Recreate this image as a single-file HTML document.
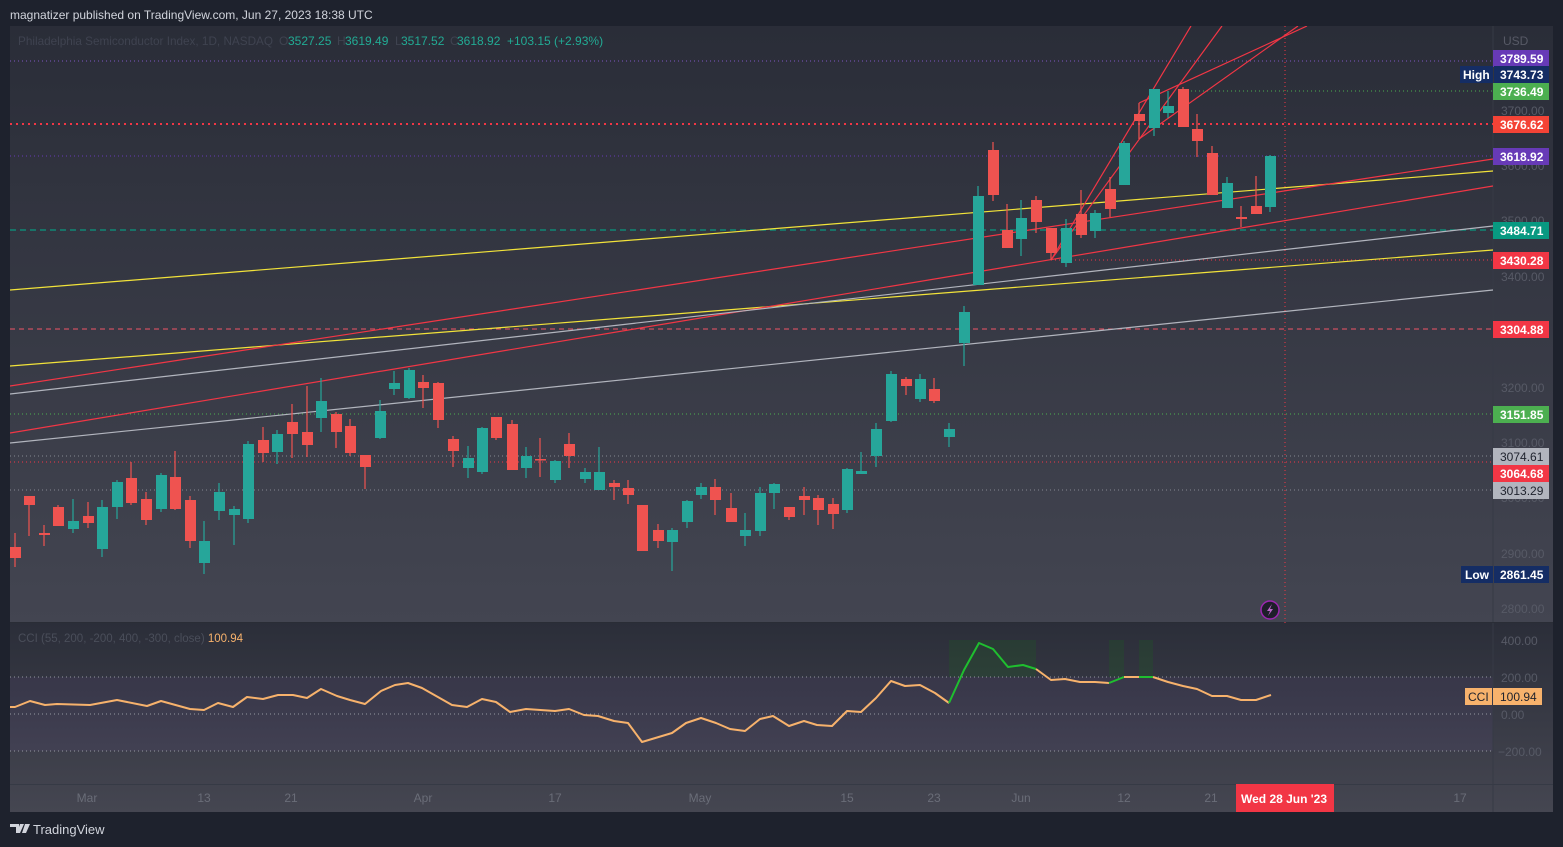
<!DOCTYPE html>
<html><head><meta charset="utf-8"><style>
html,body{margin:0;padding:0;background:#1e222d;width:1563px;height:847px;overflow:hidden}
svg{display:block;font-family:"Liberation Sans",sans-serif}
</style></head><body>
<svg width="1563" height="847" viewBox="0 0 1563 847" xmlns="http://www.w3.org/2000/svg">
<defs>
<linearGradient id="g1" x1="0" y1="0" x2="0" y2="1"><stop offset="0" stop-color="#2a2d38"/><stop offset="1" stop-color="#434551"/></linearGradient>
<linearGradient id="g2" x1="0" y1="0" x2="0" y2="1"><stop offset="0" stop-color="#2b2e39"/><stop offset="1" stop-color="#454651"/></linearGradient>
<clipPath id="cp"><rect x="10" y="26" width="1483" height="597"/></clipPath>
<clipPath id="cc"><rect x="10" y="623" width="1483" height="161"/></clipPath>
</defs>
<rect width="1563" height="847" fill="#1e222d"/>
<text x="10" y="19" fill="#d1d4dc" font-size="12">magnatizer published on TradingView.com, Jun 27, 2023 18:38 UTC</text>
<rect x="10" y="26" width="1543" height="597" fill="url(#g1)"/>
<rect x="10" y="623" width="1543" height="189" fill="url(#g2)"/>
<rect x="10" y="677" width="1483" height="74" fill="#7e57c2" fill-opacity="0.08"/>
<line x1="1493" y1="26" x2="1493" y2="812" stroke="#363a45" stroke-width="1"/>
<line x1="10" y1="784.5" x2="1553" y2="784.5" stroke="#363a45"/>
<line x1="10" y1="622.5" x2="1553" y2="622.5" stroke="#2a2d36"/>
<g clip-path="url(#cp)" fill="none">
<line x1="10" y1="61" x2="1493" y2="61" stroke="#7e57c2" stroke-dasharray="1 3"/>
<line x1="1187" y1="91" x2="1493" y2="91" stroke="#4caf50" stroke-dasharray="1 3"/>
<line x1="10" y1="124" x2="1493" y2="124" stroke="#f23645" stroke-width="2" stroke-dasharray="2 4"/>
<line x1="10" y1="156" x2="1493" y2="156" stroke="#673ab7" stroke-dasharray="1 3"/>
<line x1="10" y1="230" x2="1493" y2="230" stroke="#089981" stroke-width="1.3" stroke-dasharray="6 4"/>
<line x1="1051" y1="260" x2="1493" y2="260" stroke="#f23645" stroke-dasharray="1 3"/>
<line x1="10" y1="329" x2="1493" y2="329" stroke="#f05566" stroke-dasharray="5 4"/>
<line x1="10" y1="414" x2="1493" y2="414" stroke="#4caf50" stroke-dasharray="1 3"/>
<line x1="10" y1="456" x2="1493" y2="456" stroke="#868993" stroke-dasharray="1 3"/>
<line x1="10" y1="462" x2="1493" y2="462" stroke="#f23645" stroke-dasharray="1 3"/>
<line x1="10" y1="490" x2="1493" y2="490" stroke="#868993" stroke-dasharray="1 3"/>
<line x1="1285" y1="26" x2="1285" y2="784" stroke="#f23645" stroke-dasharray="1 3"/>
<line x1="10" y1="290" x2="1493" y2="171" stroke="#f2e33a" stroke-width="1.2"/>
<line x1="10" y1="366" x2="1493" y2="250" stroke="#f2e33a" stroke-width="1.2"/>
<line x1="10" y1="386" x2="1493" y2="159" stroke="#f23645" stroke-width="1.2"/>
<line x1="10" y1="433" x2="1493" y2="186" stroke="#f23645" stroke-width="1.2"/>
<line x1="10" y1="394" x2="1493" y2="226" stroke="#b2b5be" stroke-width="1.2"/>
<line x1="10" y1="443" x2="1493" y2="290" stroke="#b2b5be" stroke-width="1.2"/>
<line x1="1051" y1="260" x2="1191" y2="26" stroke="#f23645" stroke-width="1.2"/>
<line x1="1051" y1="260" x2="1222" y2="26" stroke="#f23645" stroke-width="1.2"/>
<line x1="1139" y1="103" x2="1307" y2="26" stroke="#f23645" stroke-width="1.2"/>
<line x1="1139" y1="139" x2="1298" y2="26" stroke="#f23645" stroke-width="1.2"/>
<path stroke="#ef5350" stroke-width="1.2" d="M15 533V567M29 496V536M44 525V546M58 505V526M88 502V528M131 462V505M146 492V525M175 451V510M190 496V548M263 427V462M292 404V458M307 386V457M336 412V448M350 419V456M365 455V489M423 375V408M438 382V428M453 436V467M496 417V440M512 420V470M540 438V477M569 433V468M614 480V500M628 480V504M642 505V551M658 524V548M715 479V515M731 493V522M789 507V520M804 487V515M818 495V525M833 498V529M906 377V395M934 378V403M993 142V201M1007 204V248M1036 196V233M1051 228V260M1081 190V238M1110 177V217M1139 103V139M1183 87V127M1197 114V157M1212 146V195M1241 206V227M1256 176V214"/>
<path fill="#ef5350" d="M10 547h11v11h-11zM24 496h11v9h-11zM39 533h11v2h-11zM53 507h11v19h-11zM83 516h11v7h-11zM126 478h11v25h-11zM141 499h11v21h-11zM170 477h11v32h-11zM185 500h11v41h-11zM258 440h11v13h-11zM287 422h11v12h-11zM302 432h11v13h-11zM331 414h11v18h-11zM345 426h11v27h-11zM360 455h11v12h-11zM418 382h11v6h-11zM433 383h11v37h-11zM448 439h11v12h-11zM491 417h11v21h-11zM507 424h11v46h-11zM535 459h11v1.5h-11zM564 444h11v12h-11zM609 483h11v4h-11zM623 488h11v7h-11zM637 505h11v46h-11zM653 530h11v11h-11zM710 487h11v13h-11zM726 508h11v14h-11zM784 507h11v10h-11zM799 496h11v4h-11zM813 498h11v12h-11zM828 504h11v10h-11zM901 379h11v7h-11zM929 389h11v12h-11zM988 150h11v45h-11zM1002 230h11v18h-11zM1031 200h11v22h-11zM1046 228h11v25h-11zM1076 214h11v21h-11zM1105 189h11v20h-11zM1134 114h11v7h-11zM1178 89h11v38h-11zM1192 129h11v12h-11zM1207 153h11v42h-11zM1236 217h11v2h-11zM1251 206h11v8h-11z"/>
<path stroke="#26a69a" stroke-width="1.2" d="M73 499V533M102 500V557M117 480V519M161 473V512M204 521V574M219 483V520M234 506V545M248 441V523M277 430V464M321 378V432M380 400V439M394 371V395M409 368V399M468 446V478M482 427V474M526 447V478M555 460V483M585 468V483M599 447V490M672 528V571M687 500V528M701 483V499M745 513V546M760 487V536M774 483V509M847 468V513M861 452V474M876 423V467M891 371V422M920 374V402M949 423V447M964 306V366M978 186V285M1021 200V256M1066 219V267M1095 210V238M1124 141V185M1154 89V136M1168 91V118M1227 177V208M1270 155V212"/>
<path fill="#26a69a" d="M68 521h11v8h-11zM97 507h11v42h-11zM112 482h11v25h-11zM156 475h11v34h-11zM199 541h11v22h-11zM214 492h11v19h-11zM229 509h11v6h-11zM243 444h11v75h-11zM272 434h11v18h-11zM316 401h11v17h-11zM375 411h11v27h-11zM389 383h11v6h-11zM404 370h11v28h-11zM463 458h11v10h-11zM477 428h11v44h-11zM521 456h11v12h-11zM550 461h11v19h-11zM580 472h11v7h-11zM594 472h11v18h-11zM667 530h11v12h-11zM682 501h11v21h-11zM696 487h11v8h-11zM740 530h11v6h-11zM755 493h11v38h-11zM769 484h11v9h-11zM842 469h11v41h-11zM856 471h11v3h-11zM871 429h11v27h-11zM886 374h11v47h-11zM915 379h11v20h-11zM944 429h11v8h-11zM959 312h11v31h-11zM973 196h11v89h-11zM1016 218h11v21h-11zM1061 228h11v35h-11zM1090 213h11v18h-11zM1119 143h11v42h-11zM1149 89h11v39h-11zM1163 106h11v7h-11zM1222 183h11v25h-11zM1265 156h11v51h-11z"/>
</g>
<g font-size="12" fill="#3f4350">
<text x="18" y="45" textLength="255" lengthAdjust="spacingAndGlyphs">Philadelphia Semiconductor Index, 1D, NASDAQ</text>
<text x="279" y="45">O</text><text x="288" y="45" fill="#22ab94">3527.25</text>
<text x="337" y="45">H</text><text x="345" y="45" fill="#22ab94">3619.49</text>
<text x="395" y="45">L</text><text x="401" y="45" fill="#22ab94">3517.52</text>
<text x="450" y="45">C</text><text x="457" y="45" fill="#22ab94">3618.92</text>
<text x="507" y="45" fill="#22ab94">+103.15 (+2.93%)</text>
</g>
<circle cx="1270" cy="610" r="9" fill="#1e1e2a" stroke="#9c27b0" stroke-width="1.5"/>
<path d="M1272 604l-5 7h3l-2 5 5-7h-3z" fill="#ba68c8"/>
<g clip-path="url(#cc)">
<rect x="949" y="640" width="87" height="37" fill="#1b5e20" fill-opacity="0.25"/>
<rect x="1109" y="640" width="15" height="37" fill="#1b5e20" fill-opacity="0.25"/>
<rect x="1139" y="640" width="14" height="37" fill="#1b5e20" fill-opacity="0.25"/>
<g stroke="#9598a1" stroke-dasharray="1 3"><line x1="10" y1="677" x2="1493" y2="677"/><line x1="10" y1="714" x2="1493" y2="714"/><line x1="10" y1="751" x2="1493" y2="751"/></g>
<polyline fill="none" stroke="#f7b26c" stroke-width="2" stroke-linejoin="round" points="10,707 15,707 30,701 45,705 57,704 90,705 117,700 147,706 161,701 190,709 204,710 218,703 233,707 247,697 263,699 278,695 293,695 307,698 321,689 337,696 350,700 365,704 381,691 395,685 408,683 422,688 452,705 467,707 482,699 496,702 510,712 526,709 555,711 569,709 584,715 598,716 614,721 628,723 642,742 672,733 686,723 701,718 716,723 730,729 745,731 760,719 773,716 789,726 804,721 817,725 832,726 847,711 861,712 876,698 891,681 905,686 920,685 935,693 949,703"/>
<polyline fill="none" stroke="#1fbf2f" stroke-width="2" stroke-linejoin="round" points="949,703 964,670 979,643 993,649 1008,667 1023,665 1036,669"/>
<polyline fill="none" stroke="#f7b26c" stroke-width="2" stroke-linejoin="round" points="1036,669 1051,680 1065,679 1080,682 1095,682 1109,683"/>
<polyline fill="none" stroke="#1fbf2f" stroke-width="2" points="1109,683 1124,677"/>
<polyline fill="none" stroke="#f7b26c" stroke-width="2" points="1124,677 1139,677"/>
<polyline fill="none" stroke="#1fbf2f" stroke-width="2" points="1139,677 1153,677"/>
<polyline fill="none" stroke="#f7b26c" stroke-width="2" stroke-linejoin="round" points="1153,677 1168,682 1183,686 1197,689 1212,696 1227,696 1241,700 1256,700 1271,695"/>
</g>
<text x="18" y="642" font-size="11.5" fill="#4a4e5a">CCI (55, 200, -200, 400, -300, close)  <tspan fill="#f7b26c">100.94</tspan></text>
<g font-size="12" fill="#575a66">
<text x="1503" y="45">USD</text>
<text x="1501" y="115">3700.00</text>
<text x="1501" y="170">3600.00</text>
<text x="1501" y="225">3500.00</text>
<text x="1501" y="281">3400.00</text>
<text x="1501" y="392">3200.00</text>
<text x="1501" y="447">3100.00</text>
<text x="1501" y="502">3000.00</text>
<text x="1501" y="558">2900.00</text>
<text x="1501" y="613">2800.00</text>
<text x="1501" y="645">400.00</text>
<text x="1501" y="682">200.00</text>
<text x="1501" y="719">0.00</text>
<text x="1498" y="756">−200.00</text>
</g>
<g font-size="12" font-weight="bold" fill="#fff">
<rect x="1493" y="50" width="56" height="17" fill="#673ab7"/><text x="1500" y="63">3789.59</text>
<rect x="1460" y="66" width="33" height="17" fill="#152d64"/><text x="1463" y="79">High</text>
<rect x="1494" y="66" width="55" height="17" fill="#152d64"/><text x="1500" y="79">3743.73</text>
<rect x="1493" y="83" width="56" height="17" fill="#4caf50"/><text x="1500" y="96">3736.49</text>
<rect x="1493" y="116" width="56" height="17" fill="#f44336"/><text x="1500" y="129">3676.62</text>
<rect x="1493" y="148" width="56" height="17" fill="#673ab7"/><text x="1500" y="161">3618.92</text>
<rect x="1493" y="222" width="56" height="17" fill="#089981"/><text x="1500" y="235">3484.71</text>
<rect x="1493" y="252" width="56" height="17" fill="#f23645"/><text x="1500" y="265">3430.28</text>
<rect x="1493" y="321" width="56" height="17" fill="#f23645"/><text x="1500" y="334">3304.88</text>
<rect x="1493" y="406" width="56" height="17" fill="#4caf50"/><text x="1500" y="419">3151.85</text>
<rect x="1493" y="448" width="56" height="17" fill="#b2b5be"/><text x="1500" y="461" fill="#1e222d" font-weight="normal">3074.61</text>
<rect x="1493" y="465" width="56" height="17" fill="#f23645"/><text x="1500" y="478">3064.68</text>
<rect x="1493" y="482" width="56" height="17" fill="#b2b5be"/><text x="1500" y="495" fill="#1e222d" font-weight="normal">3013.29</text>
<rect x="1461" y="566" width="32" height="17" fill="#152d64"/><text x="1465" y="579">Low</text>
<rect x="1494" y="566" width="55" height="17" fill="#152d64"/><text x="1500" y="579">2861.45</text>
<rect x="1465" y="688" width="27" height="17" fill="#f7b26c"/><text x="1468" y="701" fill="#1e222d" font-weight="normal">CCI</text>
<rect x="1493" y="688" width="49" height="17" fill="#f7b26c"/><text x="1500" y="701" fill="#1e222d" font-weight="normal">100.94</text>
</g>
<g font-size="12" fill="#6a6d78" text-anchor="middle">
<text x="87" y="802">Mar</text><text x="204" y="802">13</text><text x="291" y="802">21</text><text x="423" y="802">Apr</text><text x="555" y="802">17</text><text x="700" y="802">May</text><text x="847" y="802">15</text><text x="934" y="802">23</text><text x="1021" y="802">Jun</text><text x="1124" y="802">12</text><text x="1211" y="802">21</text><text x="1460" y="802">17</text>
</g>
<rect x="1236" y="784" width="98" height="28" fill="#f23645"/>
<text x="1284" y="803" font-size="12" font-weight="bold" fill="#fff" text-anchor="middle">Wed 28 Jun '23</text>
<path d="M10 824h9v9h-3v-6h-6zM20 824h4l-4 9h-3z M25 824h5l-4 9h-4z" fill="#d1d4dc"/>
<text x="33" y="834" font-size="13" fill="#d1d4dc">TradingView</text>
</svg>
</body></html>
